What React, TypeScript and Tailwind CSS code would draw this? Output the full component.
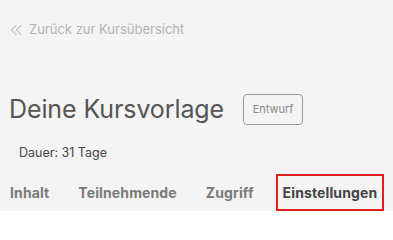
import React from "react";

export default function App() {
  return (
    <div className="w-[393px] h-[211px] bg-[#f4f4f4] overflow-hidden" style={{ fontFamily: "Inter, 'Noto Sans', sans-serif" }}>
      <div className="pt-[20px] pl-[9px] flex items-center gap-[6px] text-[#b3b3b3] text-[13px]">
        <svg width="14" height="14" viewBox="0 0 14 14" fill="none" stroke="#c4c4c4" strokeWidth="1.2" strokeLinecap="round" strokeLinejoin="round">
          <path d="M7 2.5 L2.5 7 L7 11.5" />
          <path d="M12 2.5 L7.5 7 L12 11.5" />
        </svg>
        <span>Zurück zur Kursübersicht</span>
      </div>
      <div className="mt-[54px] pl-[9px] flex items-center gap-[19px]">
        <h1 className="text-[25px] leading-[30px] text-[#555555] font-normal tracking-[-0.1px]">Deine Kursvorlage</h1>
        <span className="h-[31px] w-[60px] flex items-center justify-center border border-[#9a9a9a] rounded-[4px] text-[11px] text-[#8a8a8a]">Entwurf</span>
      </div>
      <div className="mt-[19px] pl-[19px] text-[12.5px] leading-[18px] text-[#444444]">Dauer: 31 Tage</div>
      <div className="mt-[12px] pl-[3px] flex items-center gap-[15px] text-[14px] leading-[17px] font-bold tracking-[0.12px]">
        <span className="px-[5px] py-[8px] text-[#7a7a7a] border-2 border-transparent">Inhalt</span>
        <span className="px-[5px] py-[8px] text-[#7a7a7a] border-2 border-transparent">Teilnehmende</span>
        <span className="px-[5px] py-[8px] text-[#7a7a7a] border-2 border-transparent">Zugriff</span>
        <span className="px-[5px] py-[8px] text-[#444444] border-2 border-[#e02020]">Einstellungen</span>
      </div>
    </div>
  );
}
